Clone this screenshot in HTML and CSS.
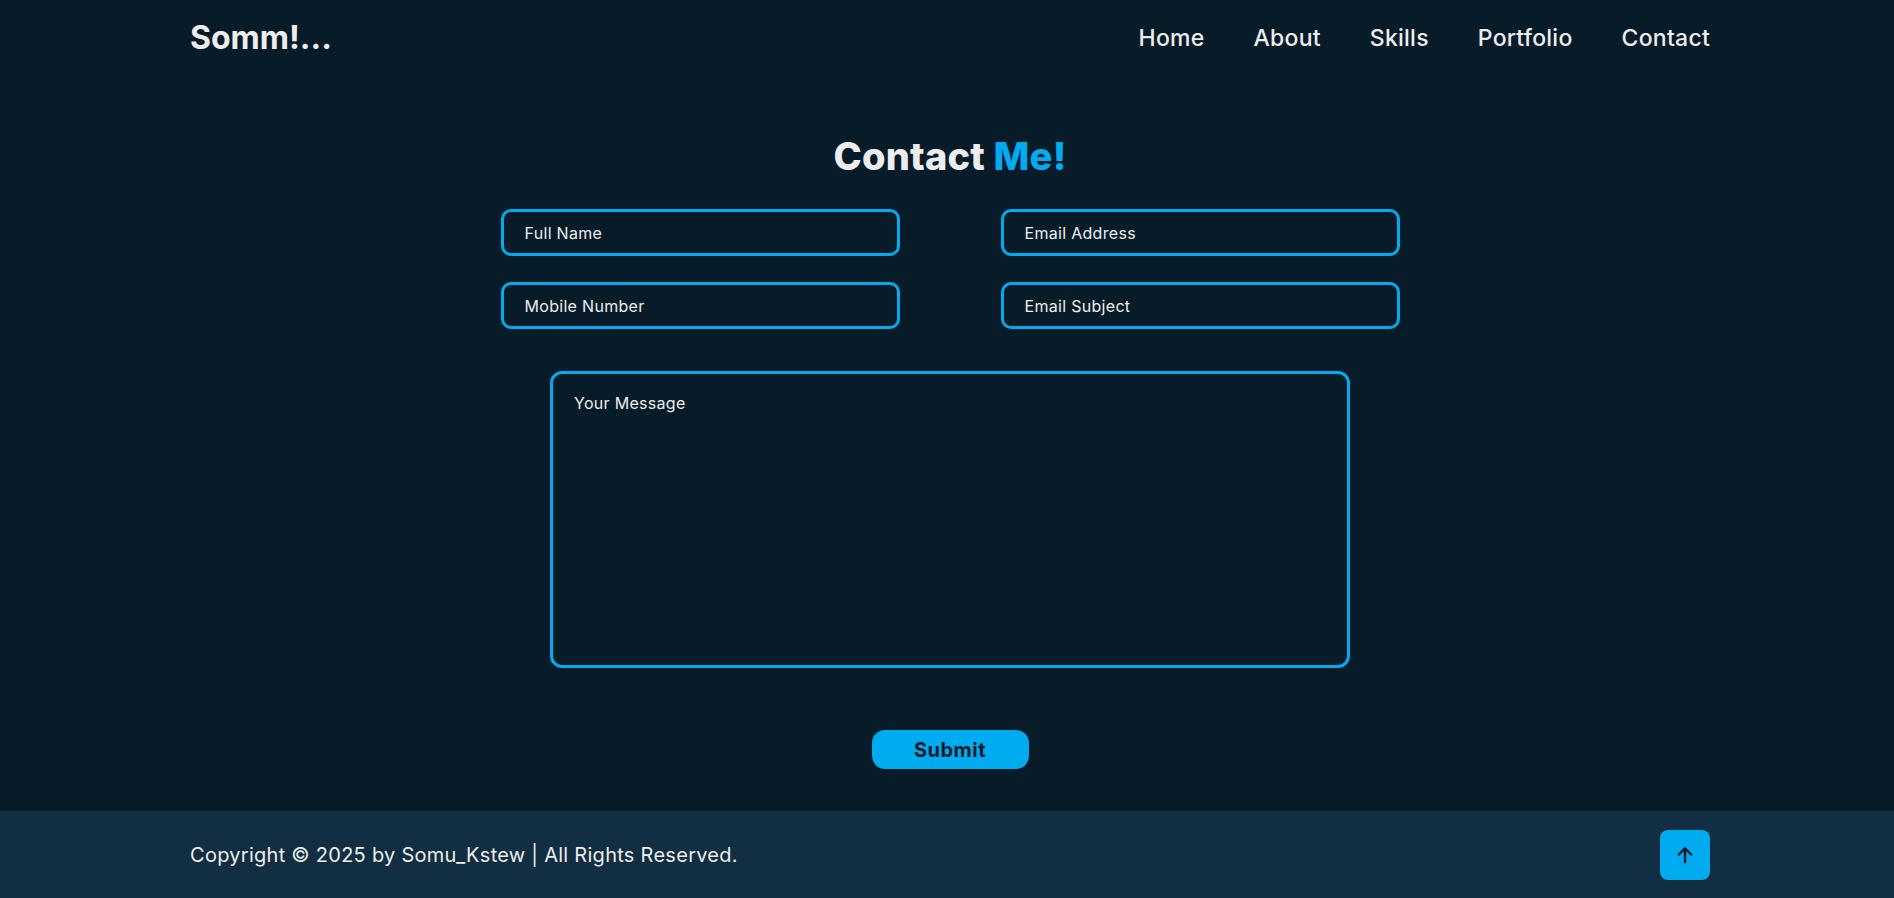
FILE: index.html
```html
<!DOCTYPE html>
<html lang="en">
<head>
<meta charset="UTF-8">
<title>Contact</title>
<link rel="stylesheet" href="styles.css">
</head>
<body>
<header class="header">
  <a class="logo" href="#">Somm!...</a>
  <nav class="nav">
    <a href="#">Home</a>
    <a href="#">About</a>
    <a href="#">Skills</a>
    <a href="#">Portfolio</a>
    <a href="#">Contact</a>
  </nav>
</header>
<main class="contact">
  <h2 class="heading">Contact <span>Me!</span></h2>
  <form class="form">
    <div class="grid">
      <input type="text" placeholder="Full Name">
      <input type="email" placeholder="Email Address">
      <input type="text" placeholder="Mobile Number">
      <input type="text" placeholder="Email Subject">
    </div>
    <textarea placeholder="Your Message"></textarea>
    <button type="button" class="btn">Submit</button>
  </form>
</main>
<footer class="footer">
  <p class="copy">Copyright &copy; 2025 by Somu_Kstew | All Rights Reserved.</p>
  <a class="top" href="#">
    <svg width="20" height="20" viewBox="0 0 20 20" fill="none" stroke="#081b29" stroke-width="2.4" stroke-linecap="round" stroke-linejoin="round"><path d="M10 17V3.5M3.8 9.5L10 3.3l6.2 6.2"/></svg>
  </a>
</footer>
</body>
</html>
```
FILE: styles.css
```css
* { box-sizing: border-box; margin: 0; padding: 0; }
html, body { overflow: hidden; }
body {
  background: #081b29;
  color: #ededed;
  font-family: "Inter", "Liberation Sans", sans-serif;
  width: 1894px;
  height: 898px;
  display: flex;
  flex-direction: column;
}
a { text-decoration: none; color: inherit; }
.header {
  height: 74px;
  padding: 0 184px 0 190px;
  display: flex;
  align-items: center;
  justify-content: space-between;
}
.logo { font-size: 32px; font-weight: 700; color: #ededed; }
.nav { display: flex; gap: 49px; padding-top: 2px; }
.nav a { font-size: 23px; font-weight: 500; letter-spacing: 0.25px; color: #ededed; }
.contact {
  flex: 1;
  padding: 57px 184px 0 190px;
  display: flex;
  flex-direction: column;
  align-items: center;
}
.heading { font-size: 38px; font-weight: 800; line-height: 50px; letter-spacing: 0.2px; color: #ededed; }
.heading span { color: #00abf0; }
.form { display: flex; flex-direction: column; align-items: center; margin-top: 28px; }
.grid {
  display: grid;
  grid-template-columns: 399px 399px;
  column-gap: 101px;
  row-gap: 26px;
}
input, textarea {
  font-family: inherit;
  font-size: 16px;
  letter-spacing: 0.3px;
  color: #ededed;
  background: transparent;
  border: 3px solid #00abf0;
  border-radius: 10px;
  outline: none;
}
input { height: 47px; padding: 0 21px; }
textarea {
  width: 800px;
  height: 297px;
  margin-top: 42px;
  padding: 19px 21px;
  border-radius: 12px;
  resize: none;
}
::placeholder { color: #ededed; opacity: 1; }
.btn {
  margin-top: 62px;
  width: 157px;
  height: 39px;
  border: none;
  border-radius: 13px;
  background: #00abf0;
  color: #081b29;
  font-family: inherit;
  font-size: 20px;
  font-weight: 700;
  letter-spacing: 0.5px;
}
.footer {
  height: 87px;
  background: #112e42;
  padding: 0 184px 0 190px;
  display: flex;
  align-items: center;
  justify-content: space-between;
}
.copy { font-size: 20px; letter-spacing: 0.27px; }
.top {
  width: 50px;
  height: 50px;
  border-radius: 8px;
  background: #00abf0;
  display: flex;
  align-items: center;
  justify-content: center;
}
```
